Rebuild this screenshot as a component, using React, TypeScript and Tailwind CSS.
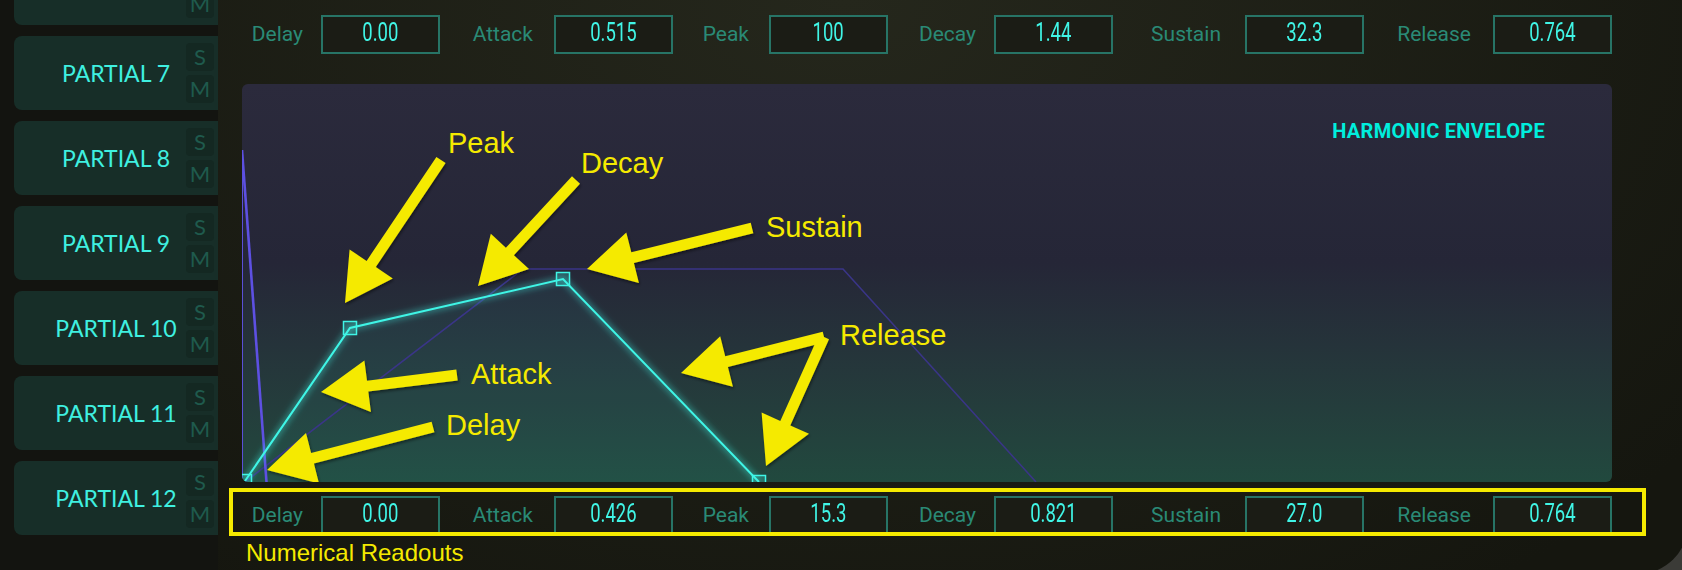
import React from 'react'

type Pt = [number, number]

const TOP_VALUES = ['0.00', '0.515', '100', '1.44', '32.3', '0.764']
const BOTTOM_VALUES = ['0.00', '0.426', '15.3', '0.821', '27.0', '0.764']
const LABELS = ['Delay', 'Attack', 'Peak', 'Decay', 'Sustain', 'Release']
// each readout group ends at its box's right edge
const GROUP_CLASSES = [
    'w-[198px] gap-[18px]',
    'w-[233px] gap-[21px]',
    'w-[215px] gap-[20px]',
    'w-[225px] gap-[18px]',
    'w-[251px] gap-[24px]',
    'w-[248px] gap-[22px]',
]

const PARTIALS = [6, 7, 8, 9, 10, 11, 12]

// envelope points in page coordinates
const ENV: Pt[] = [
    [245, 481],
    [350, 328],
    [563, 279],
    [759, 482],
]

const GHOST: Pt[] = [
    [245, 482],
    [523, 269],
    [843, 269],
    [1036, 482],
]

const ARROWS: { tail: Pt; tip: Pt }[] = [
    { tail: [441, 160], tip: [345, 303] },
    { tail: [576, 180], tip: [478, 286] },
    { tail: [752, 228], tip: [587, 269] },
    { tail: [824, 337], tip: [681, 373] },
    { tail: [824, 337], tip: [766, 466] },
    { tail: [457, 375], tip: [321, 392] },
    { tail: [433, 427], tip: [267, 470] },
]

const NOTES: { text: string; x: number; y: number }[] = [
    { text: 'Peak', x: 448, y: 153 },
    { text: 'Decay', x: 581, y: 173 },
    { text: 'Sustain', x: 766, y: 237 },
    { text: 'Release', x: 840, y: 345 },
    { text: 'Attack', x: 471, y: 384 },
    { text: 'Delay', x: 446, y: 435 },
]

function arrowPoints(tail: Pt, tip: Pt, shaft = 11, headLen = 47, headW = 52) {
    const dx = tip[0] - tail[0]
    const dy = tip[1] - tail[1]
    const len = Math.hypot(dx, dy)
    const ux = dx / len
    const uy = dy / len
    const nx = -uy
    const ny = ux
    const bx = tip[0] - ux * headLen
    const by = tip[1] - uy * headLen
    const pts: Pt[] = [
        [tail[0] + (nx * shaft) / 2, tail[1] + (ny * shaft) / 2],
        [bx + (nx * shaft) / 2, by + (ny * shaft) / 2],
        [bx + (nx * headW) / 2, by + (ny * headW) / 2],
        tip,
        [bx - (nx * headW) / 2, by - (ny * headW) / 2],
        [bx - (nx * shaft) / 2, by - (ny * shaft) / 2],
        [tail[0] - (nx * shaft) / 2, tail[1] - (ny * shaft) / 2],
    ]
    return pts.map((p) => `${p[0].toFixed(1)},${p[1].toFixed(1)}`).join(' ')
}

const toPoints = (pts: Pt[]) => pts.map((p) => `${p[0]},${p[1]}`).join(' ')

function PartialCard({ n }: { n: number }) {
    return (
        <div className="grid h-[74px] w-[204px] shrink-0 grid-cols-[32px_1fr_32px] items-center rounded-l-[8px] bg-[#172e28]">
            <div />
            <div className="text-center font-['Lato'] text-[23px] leading-none text-[#3ff0e0]">PARTIAL {n}</div>
            <div className="flex flex-col items-center gap-[4px] pr-[4px]">
                <div className="flex h-[28px] w-[28px] items-center justify-center rounded-[4px] bg-[#142822] font-['Lato'] text-[22px] leading-none text-[#1f5a4d]">
                    S
                </div>
                <div className="flex h-[28px] w-[28px] items-center justify-center rounded-[4px] bg-[#142822] font-['Lato'] text-[22px] leading-none text-[#1f5a4d]">
                    M
                </div>
            </div>
        </div>
    )
}

function ReadoutRow({ values }: { values: string[] }) {
    return (
        <div className="flex items-center">
            {LABELS.map((label, i) => (
                <div key={label} className={`flex shrink-0 items-center justify-end ${GROUP_CLASSES[i]}`}>
                    <span className="font-['Roboto'] text-[21px] leading-none text-[#2a8a76]">{label}</span>
                    <div className="flex h-[39px] w-[119px] items-center justify-center border-2 border-[#277466] bg-[#1b1c15] pb-[5px]">
                        <span className="inline-block scale-x-[0.74] font-['Roboto'] text-[25px] leading-none text-[#40f5e6]">
                            {values[i]}
                        </span>
                    </div>
                </div>
            ))}
        </div>
    )
}

function EnvelopeChart() {
    return (
        <svg className="absolute inset-0" width={1370} height={398} viewBox="242 84 1370 398">
            <defs>
                <filter id="glow" x="-10%" y="-10%" width="120%" height="120%">
                    <feGaussianBlur stdDeviation="3" />
                </filter>
                <filter id="shadow" x="-20%" y="-20%" width="140%" height="140%">
                    <feDropShadow dx="1" dy="2" stdDeviation="1.5" floodColor="#000" floodOpacity="0.45" />
                </filter>
            </defs>

            <polygon points={toPoints([...ENV, [759, 482], [245, 482]])} fill="#3ff5e6" fillOpacity="0.05" />

            <polyline points={toPoints(GHOST)} fill="none" stroke="#3a3588" strokeWidth="1.6" />

            <line x1="242.5" y1="150" x2="242.5" y2="482" stroke="#5a4fd8" strokeWidth="1" />
            <line x1="242" y1="150" x2="266.5" y2="482" stroke="#5d50e2" strokeWidth="2.6" />

            <polyline points={toPoints(ENV)} fill="none" stroke="#3ff5e6" strokeWidth="5" strokeOpacity="0.45" filter="url(#glow)" />
            <polyline points={toPoints(ENV)} fill="none" stroke="#3ff5e6" strokeWidth="2" />
            {ENV.map((p, i) => (
                <rect
                    key={i}
                    x={p[0] - 6.5}
                    y={p[1] - 6.5}
                    width="13"
                    height="13"
                    fill="#3ff5e6"
                    fillOpacity="0.22"
                    stroke="#3ff5e6"
                    strokeWidth="1.5"
                />
            ))}

            <g filter="url(#shadow)">
                {ARROWS.map((a, i) => (
                    <polygon key={i} points={arrowPoints(a.tail, a.tip)} fill="#f5ea00" strokeLinejoin="round" />
                ))}
            </g>

            {NOTES.map((n) => (
                <text
                    key={n.text}
                    x={n.x}
                    y={n.y}
                    fontSize="29"
                    fontFamily="'Liberation Sans', Arial, sans-serif"
                    fill="#f5ea00"
                >
                    {n.text}
                </text>
            ))}
        </svg>
    )
}

export default function App() {
    return (
        <div className="relative h-[570px] w-[1682px] overflow-hidden bg-[#3b3b37]">
            <div className="flex h-[574px] w-[1688px] overflow-hidden rounded-br-[50px] bg-radial-[at_50%_0%] from-[#25271c] to-[#15160f] to-90%">
                <div className="flex w-[218px] shrink-0 flex-col gap-[11px] bg-[#131410] pl-[14px] -mt-[49px]">
                    {PARTIALS.map((n) => (
                        <PartialCard key={n} n={n} />
                    ))}
                </div>

                <div className="relative ml-[24px] flex w-[1370px] shrink-0 flex-col">
                    <div className="pt-[15px]">
                        <ReadoutRow values={TOP_VALUES} />
                    </div>

                    <div className="relative mt-[30px] h-[398px] overflow-hidden rounded-[6px] bg-linear-to-b from-[#2b2a3c] via-[#252637] via-45% to-[#21493e]">
                        <EnvelopeChart />
                        <div className="relative flex justify-end pr-[67px] pt-[37px]">
                            <span className="font-['Roboto'] text-[20px] font-bold leading-none tracking-[0.3px] text-[#00eedd]">
                                HARMONIC ENVELOPE
                            </span>
                        </div>
                    </div>

                    <div className="mt-[14px]">
                        <ReadoutRow values={BOTTOM_VALUES} />
                    </div>

                    <div className="ml-[4px] mt-[6px] font-['Liberation_Sans'] text-[24px] leading-none text-[#f5ea00]">
                        Numerical Readouts
                    </div>

                    <div className="pointer-events-none absolute left-[-13px] top-[488px] h-[48px] w-[1417px] border-4 border-[#f5ea00]" />
                </div>
            </div>
        </div>
    )
}
